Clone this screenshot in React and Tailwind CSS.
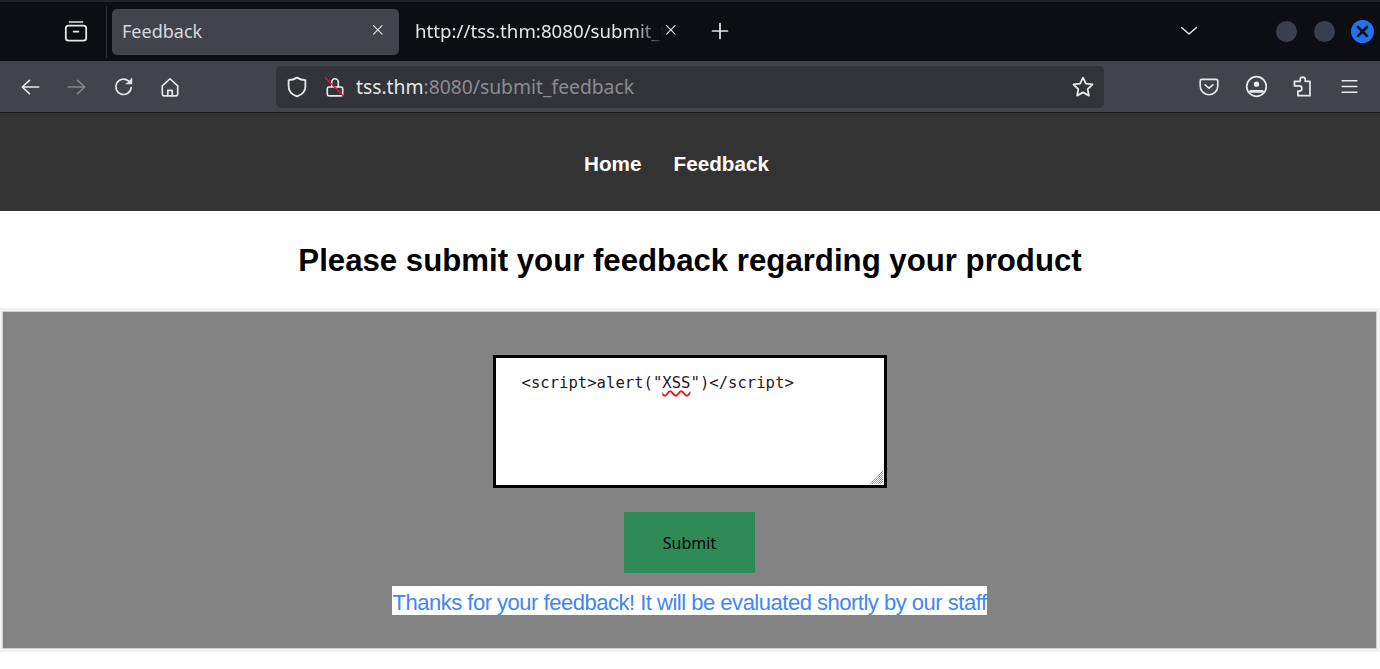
const uiFont = { fontFamily: '"Noto Sans", sans-serif' };

const Icon = ({ className = "", children, size = 20 }) => (
  <svg
    width={size}
    height={size}
    viewBox="0 0 20 20"
    fill="none"
    stroke="currentColor"
    strokeWidth="1.5"
    strokeLinecap="round"
    strokeLinejoin="round"
    className={`shrink-0 ${className}`}
  >
    {children}
  </svg>
);

const TabBar = () => (
  <div className="flex h-[61px] shrink-0 items-center border-t-2 border-[#23232e] bg-[#0d0e13] text-[#e6e6e8]">
    <div className="flex w-[107px] h-[52px] shrink-0 items-center justify-end pr-[18px] border-r border-[#2e2f36]">
      <Icon size={24} className="-translate-y-[1px]">
        <path d="M4.500 2.500h11" strokeWidth="1.200" />
        <rect x="1.500" y="5.500" width="17" height="12.500" rx="2.200" />
        <path d="M8 10.500h4" />
      </Icon>
    </div>
    <div className="ml-[5px] flex h-[46px] w-[287px] shrink-0 items-center justify-between rounded-[5px] bg-[#42444c] pl-[10px] pr-[11px]">
      <span className="text-[18px] text-[#d8d9dc]">Feedback</span>
      <Icon size={17}>
        <path d="M3 3l10 10M13 3L3 13" strokeWidth="1.300" />
      </Icon>
    </div>
    <div className="ml-[16px] flex w-[268px] shrink-0 items-center">
      <span className="w-[249px] overflow-hidden whitespace-nowrap text-[18.700px] [mask-image:linear-gradient(to_right,black_88%,transparent)]">
        http://tss.thm:8080/submit_feedback
      </span>
      <Icon size={17}>
        <path d="M3 3l10 10M13 3L3 13" strokeWidth="1.300" />
      </Icon>
    </div>
    <Icon size={20} className="ml-[28px]">
      <path d="M9 1.500v15M1.500 9h15" strokeWidth="1.700" />
    </Icon>
    <div className="flex-1" />
    <Icon size={20} className="mb-[2px] -mr-[1px]">
      <path d="M2.500 6.500L10 13l7.500-6.500" />
    </Icon>
    <div className="ml-[78px] h-[21px] w-[21px] rounded-full bg-[#3a3f4f]" />
    <div className="ml-[17px] h-[21px] w-[21px] rounded-full bg-[#3a3f4f]" />
    <div className="ml-[16px] mr-[6px] flex h-[23px] w-[23px] items-center justify-center rounded-full bg-[#2272f0] text-[#0d0e13]">
      <svg width="13" height="13" viewBox="0 0 13 13" fill="none" stroke="currentColor" strokeWidth="2.600" strokeLinecap="round">
        <path d="M2 2l9 9M11 2l-9 9" />
      </svg>
    </div>
  </div>
);

const ToolBar = () => (
  <div className="flex h-[52px] shrink-0 items-center border-b border-[#15161a] bg-[#42444c] text-[#e8e8ea]">
    <Icon size={22} className="ml-[19px]">
      <path d="M18 10H3M9.500 4L3 10l6.500 6" />
    </Icon>
    <Icon size={22} className="ml-[25px] text-[#85868c]">
      <path d="M2 10h15M10.500 4L17 10l-6.500 6" />
    </Icon>
    <Icon size={22} className="ml-[25px]">
      <path d="M16.500 10.500a7 7 0 1 1-2.400-6" />
      <path d="M17 2v5h-5" fill="currentColor" strokeWidth="1" />
    </Icon>
    <Icon size={22} className="ml-[24px]">
      <path d="M3 9l7-6.500L17 9v7.500a1.500 1.500 0 0 1-1.500 1.500h-11A1.500 1.500 0 0 1 3 16.500z" />
      <path d="M8 18v-5h4v5" />
    </Icon>
    <div className="ml-[95px] flex h-[42px] w-[828px] shrink-0 items-center rounded-[5px] bg-[#33343a] pl-[9px] pr-[9px]">
      <Icon size={24}>
        <path d="M10 2.200c2.300 1.400 4.700 2 7 2.100v5.200c0 4-3 6.900-7 8.300-4-1.400-7-4.300-7-8.300V4.300c2.300-.1 4.700-.7 7-2.100z" />
      </Icon>
      <span className="relative ml-[15px] h-[22px] w-[22px]">
        <Icon size={22}>
          <rect x="3" y="10" width="14" height="8" rx="1.500" />
          <path d="M7 10V5.500a3 3 0 0 1 6 0V10" />
        </Icon>
        <svg width="22" height="22" viewBox="0 0 22 22" className="absolute left-0 top-0" fill="none" stroke="#d81b48" strokeWidth="1.400">
          <path d="M1 1.500l19 19" />
        </svg>
      </span>
      <span className="ml-[10px] text-[19.300px] leading-none text-[#e6e6e8]">
        tss.thm<span className="text-[#8b8c92]">:8080/submit_feedback</span>
      </span>
      <div className="flex-1" />
      <Icon size={24}>
        <path d="M10 2.200l2.400 5 5.500.7-4 3.800 1 5.500L10 14.500l-4.900 2.700 1-5.500-4-3.800 5.500-.7z" />
      </Icon>
    </div>
    <div className="flex-1" />
    <Icon size={22}>
      <path d="M3.500 3h13A1.500 1.500 0 0 1 18 4.500V9a8 8 0 0 1-16 0V4.500A1.500 1.500 0 0 1 3.500 3z" />
      <path d="M6.500 8L10 11l3.500-3" />
    </Icon>
    <Icon size={23} className="ml-[24px] translate-x-[1px]">
      <circle cx="10" cy="10" r="8.500" />
      <circle cx="10" cy="8" r="2.300" fill="currentColor" stroke="none" />
      <path d="M5 14.200h10" strokeWidth="2.400" />
    </Icon>
    <Icon size={23} className="ml-[24px]">
      <path d="M8 5.500V4a2.200 2.200 0 0 1 4.400 0v1.500h4.100v12.500H6v-4h1.200a2.200 2.200 0 0 0 0-4.500H3V5.500z" />
    </Icon>
    <Icon size={21} className="ml-[25px] mr-[20px]">
      <path d="M3 4.500h14M3 10h14M3 15.500h14" />
    </Icon>
  </div>
);

const Page = () => (
  <div style={{ fontFamily: '"Liberation Sans", sans-serif' }} className="flex-1 bg-white">
    <nav className="flex h-[98px] items-center justify-center gap-[32px] bg-[#333333] pr-[27px] pt-[4px] text-[20.700px] font-bold text-white">
      <a>Home</a>
      <a>Feedback</a>
    </nav>
    <h1 className="flex h-[97px] items-center justify-center pt-[4px] text-[31.200px] font-bold text-black">
      Please submit your feedback regarding your product
    </h1>
    <div className="bg-[#f2f2f2] pl-[2px] pr-[3px] py-[3px]">
      <div className="flex h-[338px] flex-col items-center border border-[#d0d0d0] bg-[#838383] pt-[43px]">
        <div
          style={{ fontFamily: '"DejaVu Sans Mono", monospace' }}
          className="relative h-[133px] w-[394px] border-[3px] border-black bg-white pl-[26px] pt-[15px] text-[15.600px] leading-[20px] text-[#1a1a1a]"
        >
          {'<script>alert("'}
          <span className="underline decoration-wavy decoration-[#e01b24] decoration-[1.500px] underline-offset-2">XSS</span>
          {'")</script>'}
          <svg width="15" height="15" viewBox="0 0 15 15" className="absolute bottom-0 right-0" stroke="#a0a0a0" strokeWidth="1">
            <path d="M1 14L14 1M3 14L14 3M5 14l9-9M7 14l7-7M9 14l5-5M11 14l3-3" />
          </svg>
        </div>
        <button
          style={uiFont}
          className="mt-[24px] h-[61px] w-[131px] bg-[#2e8b57] text-[16px] text-black"
        >
          Submit
        </button>
        <p className="mt-[13px] flex h-[29px] items-center bg-white pt-[3px] text-[22px] tracking-[-0.490px] text-[#4285f4]">
          Thanks for your feedback! It will be evaluated shortly by our staff
        </p>
      </div>
    </div>
  </div>
);

const App = () => {
  return (
    <div style={uiFont} className="flex h-[669px] w-full flex-col overflow-hidden">
      <TabBar />
      <ToolBar />
      <Page />
    </div>
  );
};

export default App;
